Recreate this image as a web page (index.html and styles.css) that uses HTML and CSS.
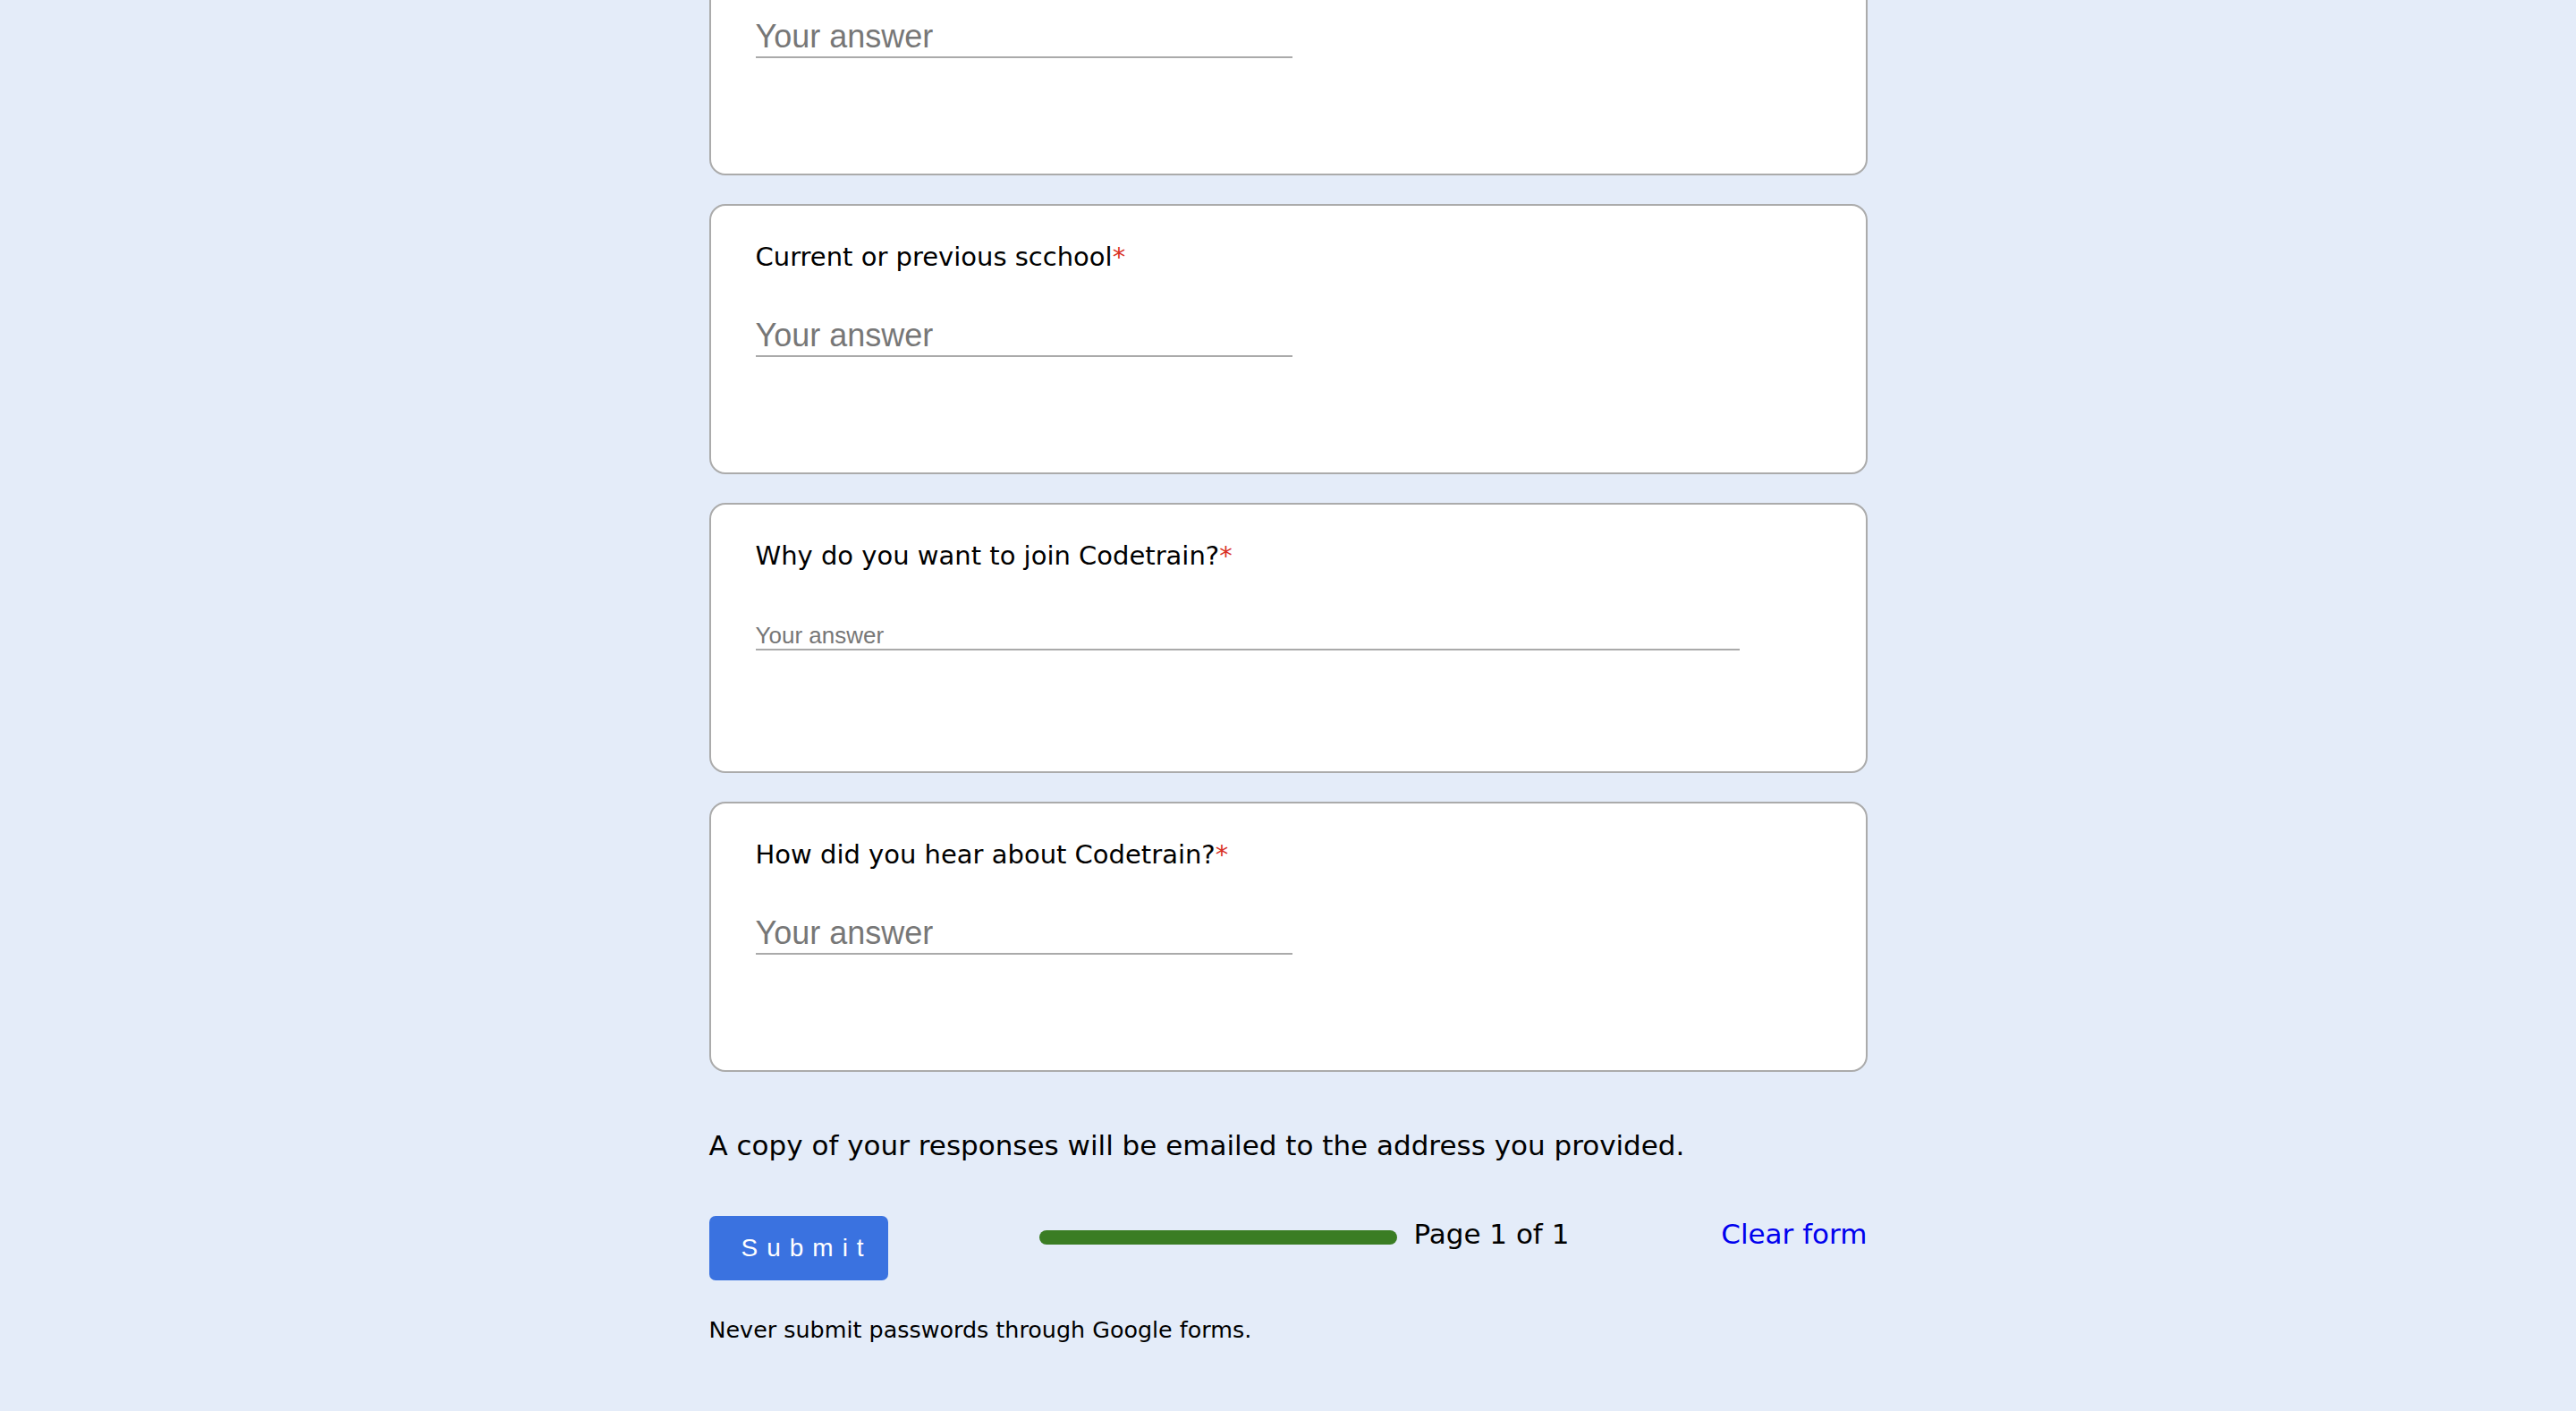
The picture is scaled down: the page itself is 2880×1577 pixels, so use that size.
FILE: index.html
```html
<!DOCTYPE html>
<html lang="en">
<head>
<meta charset="utf-8">
<title>Codetrain application</title>
<link rel="stylesheet" href="styles.css">
</head>
<body>
<main class="form">
  <section class="card">
    <div class="question question-empty"></div>
    <div class="answer">Your answer</div>
  </section>
  <section class="card">
    <div class="question">Current or previous scchool<span class="req">*</span></div>
    <div class="answer">Your answer</div>
  </section>
  <section class="card">
    <div class="question">Why do you want to join Codetrain?<span class="req">*</span></div>
    <div class="answer answer-long">Your answer</div>
  </section>
  <section class="card">
    <div class="question">How did you hear about Codetrain?<span class="req">*</span></div>
    <div class="answer">Your answer</div>
  </section>
  <p class="notice">A copy of your responses will be emailed to the address you provided.</p>
  <div class="actions">
    <button class="submit" type="button">Submit</button>
    <div class="progress">
      <div class="bar"></div>
      <span class="page">Page 1 of 1</span>
    </div>
    <a class="clear" href="#">Clear form</a>
  </div>
  <p class="warning">Never submit passwords through Google forms.</p>
</main>
</body>
</html>
```
FILE: styles.css
```css
html, body {
  margin: 0;
  padding: 0;
  background: #e4ecf9;
}
body {
  font-family: "DejaVu Sans", Verdana, sans-serif;
  color: #000;
  overflow: hidden;
}
.form {
  width: 1295px;
  margin: -106px auto 0;
  display: flex;
  flex-direction: column;
}
.card {
  box-sizing: border-box;
  height: 302px;
  margin-bottom: 32px;
  background: #fff;
  border: 2px solid #ababab;
  border-radius: 18px;
  padding: 39px 50px 0;
}
.question {
  font-size: 29px;
  line-height: 36px;
}
.question-empty {
  height: 36px;
}
.req {
  color: #d93025;
}
.answer {
  margin-top: 50px;
  width: 600px;
  font-family: "Liberation Sans", Arial, sans-serif;
  font-size: 36px;
  line-height: 40px;
  color: #777;
  padding-bottom: 2px;
  border-bottom: 2px solid #aaa;
}
.answer-long {
  width: 1100px;
  font-size: 26px;
  line-height: 30px;
  margin-top: 56px;
  padding-bottom: 0;
}
.notice {
  margin: 30px 0 0;
  font-size: 31px;
  line-height: 40px;
}
.actions {
  margin-top: 59px;
  display: flex;
  justify-content: space-between;
  align-items: flex-start;
}
.submit {
  box-sizing: border-box;
  width: 200px;
  height: 72px;
  border: none;
  border-radius: 7px;
  background: #3a72e0;
  color: #fff;
  font-family: "Liberation Sans", Arial, sans-serif;
  font-size: 28px;
  letter-spacing: 10px;
  text-align: left;
  padding: 0 0 0 36px;
}
.progress {
  display: flex;
  align-items: center;
  gap: 18px;
}
.bar {
  width: 400px;
  height: 16px;
  margin-top: 8px;
  border-radius: 8px;
  background: #3a7d24;
}
.page {
  font-size: 31px;
  line-height: 40px;
}
.clear {
  font-size: 31px;
  line-height: 40px;
  color: #0000ee;
  text-decoration: none;
}
.warning {
  margin: 39px 0 0;
  font-size: 25.4px;
  line-height: 32px;
}
```
